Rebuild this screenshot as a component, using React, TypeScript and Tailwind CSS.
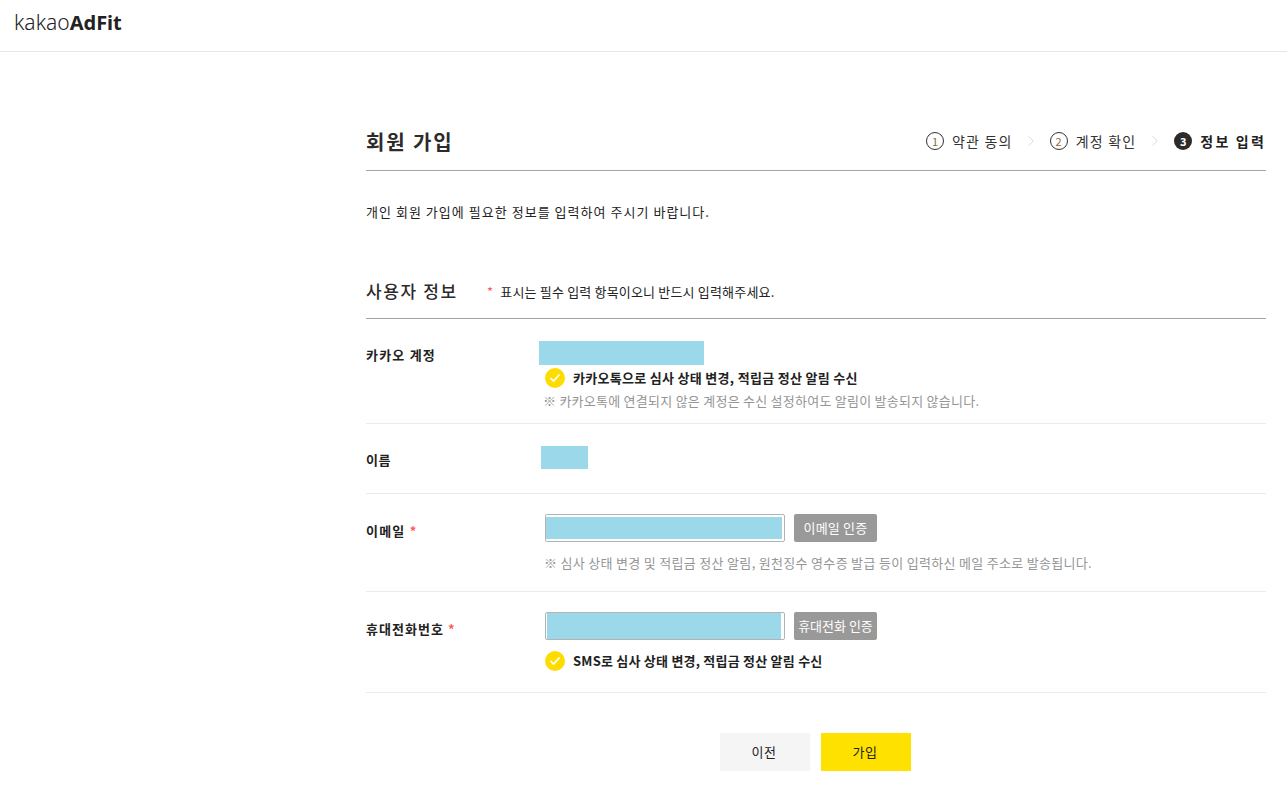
import { ChevronRight } from "lucide-react"

const font = "font-['Noto_Sans_CJK_KR','Noto_Sans',sans-serif]"

function CheckMark() {
  return (
    <span className="flex h-5 w-5 shrink-0 items-center justify-center rounded-full bg-[#ffdc00]">
      <svg width="12" height="10" viewBox="0 0 12 10" fill="none">
        <path d="M1.5 5l3 3 6-6.5" stroke="#fff" strokeWidth="1.7" />
      </svg>
    </span>
  )
}

function Step({ n, label, active }: { n: string; label: string; active?: boolean }) {
  return (
    <div className="flex items-center">
      {active ? (
        <span className="flex h-[18px] w-[18px] items-center justify-center rounded-full bg-[#2d2a2b] text-[11px] font-bold text-white">{n}</span>
      ) : (
        <span className="flex h-[18px] w-[18px] items-center justify-center rounded-full border border-[#333] text-[11px] text-[#8a6a3a]">{n}</span>
      )}
      <span className={active ? "ml-2 text-sm font-bold tracking-[2.2px] text-[#222]" : "ml-2 text-sm tracking-[1.2px] text-[#333]"}>{label}</span>
    </div>
  )
}

function Notice({ children, wide }: { children: string; wide?: boolean }) {
  return <p className={wide ? "text-[13px] leading-4 tracking-[0.31px] text-[#959595]" : "text-[13px] leading-4 tracking-[0.25px] text-[#959595]"}>{children}</p>
}

export default function App() {
  return (
    <div className={`min-h-[786px] bg-white ${font}`}>
      <header className="flex h-[52px] items-start border-b border-[#e6e6e6] pl-[14px] pt-[6px]">
        <span className="font-['Noto_Sans',sans-serif] text-[21px] leading-[32px] text-[#222]">
          <span className="font-light">kakao</span>
          <span className="text-[20px] font-bold">AdFit</span>
        </span>
      </header>

      <main className="ml-[366px] w-[900px]">
        <div className="flex h-[119px] items-end justify-between border-b border-[#a3a3a3] pb-[14px]">
          <h1 className="text-[20px] font-bold leading-[28px] tracking-[1.9px] text-[#2d2a2b]">회원 가입</h1>
          <div className="flex items-center pb-[5px]">
            <Step n="1" label="약관 동의" />
            <ChevronRight className="ml-[9px] mr-[10px] h-[18px] w-[18px] text-[#ccc]" strokeWidth={1} />
            <Step n="2" label="계정 확인" />
            <ChevronRight className="mx-[10px] h-[18px] w-[18px] text-[#ccc]" strokeWidth={1} />
            <Step n="3" label="정보 입력" active />
          </div>
        </div>

        <p className="mt-[32px] text-[13px] leading-[18px] tracking-[1.03px] text-[#222]">개인 회원 가입에 필요한 정보를 입력하여 주시기 바랍니다.</p>

        <div className="mt-[57px] flex h-[41px] items-start border-b border-[#a3a3a3]">
          <h2 className="w-[121px] text-[17px] font-medium leading-[25px] tracking-[1.6px] text-[#2d2a2b]">사용자 정보</h2>
          <p className="mt-[5px] text-[13px] leading-[18px] tracking-[0.18px] text-[#222]">
            <span className="mr-[7px] text-[#ff5a5a]">*</span>표시는 필수 입력 항목이오니 반드시 입력해주세요.
          </p>
        </div>

        <section className="flex h-[105px] border-b border-[#ebebeb]">
          <div className="w-[173px] pt-[27px] text-[13px] font-bold leading-[18px] tracking-[1.2px] text-[#222]">카카오 계정</div>
          <div className="pt-[22px]">
            <div className="h-6 w-[165px] bg-[#9bd8ea]" />
            <div className="ml-[6px] mt-[3px] flex items-center gap-2">
              <CheckMark />
              <span className="text-[13px] font-bold leading-4 tracking-[0.3px] text-[#222]">카카오톡으로 심사 상태 변경, 적립금 정산 알림 수신</span>
            </div>
            <div className="ml-1 mt-[5px]">
              <Notice>※ 카카오톡에 연결되지 않은 계정은 수신 설정하여도 알림이 발송되지 않습니다.</Notice>
            </div>
          </div>
        </section>

        <section className="flex h-[70px] border-b border-[#ebebeb]">
          <div className="w-[175px] pt-[27px] text-[13px] font-bold leading-[18px] tracking-[0.5px] text-[#222]">이름</div>
          <div className="pt-[22px]">
            <div className="h-[23px] w-[47px] bg-[#9bd8ea]" />
          </div>
        </section>

        <section className="flex h-[98px] border-b border-[#ebebeb]">
          <div className="w-[179px] pt-[28px] text-[13px] font-bold leading-[18px] tracking-[1.2px] text-[#222]">
            이메일 <span className="text-[#ff5a5a]">*</span>
          </div>
          <div className="pt-5">
            <div className="flex gap-[9px]">
              <div className="h-7 w-[240px] rounded-[2px] border border-[#b4b4b4] pt-[2px]">
                <div className="h-[22px] w-[236px] bg-[#9bd8ea]" />
              </div>
              <button className="h-7 w-[83px] rounded-[2px] bg-[#999] text-[13px] tracking-[0.2px] text-white">이메일 인증</button>
            </div>
            <div className="-ml-px mt-[13px]">
              <Notice wide>※ 심사 상태 변경 및 적립금 정산 알림, 원천징수 영수증 발급 등이 입력하신 메일 주소로 발송됩니다.</Notice>
            </div>
          </div>
        </section>

        <section className="flex h-[101px] border-b border-[#ebebeb]">
          <div className="w-[179px] pt-[28px] text-[13px] font-bold leading-[18px] tracking-[1.05px] text-[#222]">
            휴대전화번호 <span className="text-[#ff5a5a]">*</span>
          </div>
          <div className="pt-5">
            <div className="flex gap-[9px]">
              <div className="h-7 w-[240px] rounded-[2px] border border-[#b4b4b4] pl-px">
                <div className="h-[26px] w-[234px] bg-[#9bd8ea]" />
              </div>
              <button className="h-7 w-[83px] whitespace-nowrap rounded-[2px] bg-[#999] text-[13px] text-white">휴대전화 인증</button>
            </div>
            <div className="mt-[11px] flex items-center gap-2">
              <CheckMark />
              <span className="text-[13px] font-bold leading-4 tracking-[0.22px] text-[#222]">SMS로 심사 상태 변경, 적립금 정산 알림 수신</span>
            </div>
          </div>
        </section>

        <div className="mt-10 flex justify-center gap-[11px] pr-[1px]">
          <button className="h-[38px] w-[90px] bg-[#f5f5f5] pr-0.5 text-[13px] tracking-[0.5px] text-[#222]">이전</button>
          <button className="h-[38px] w-[90px] bg-[#ffe100] pr-0.5 text-[13px] tracking-[0.5px] text-[#222]">가입</button>
        </div>
      </main>
    </div>
  )
}
